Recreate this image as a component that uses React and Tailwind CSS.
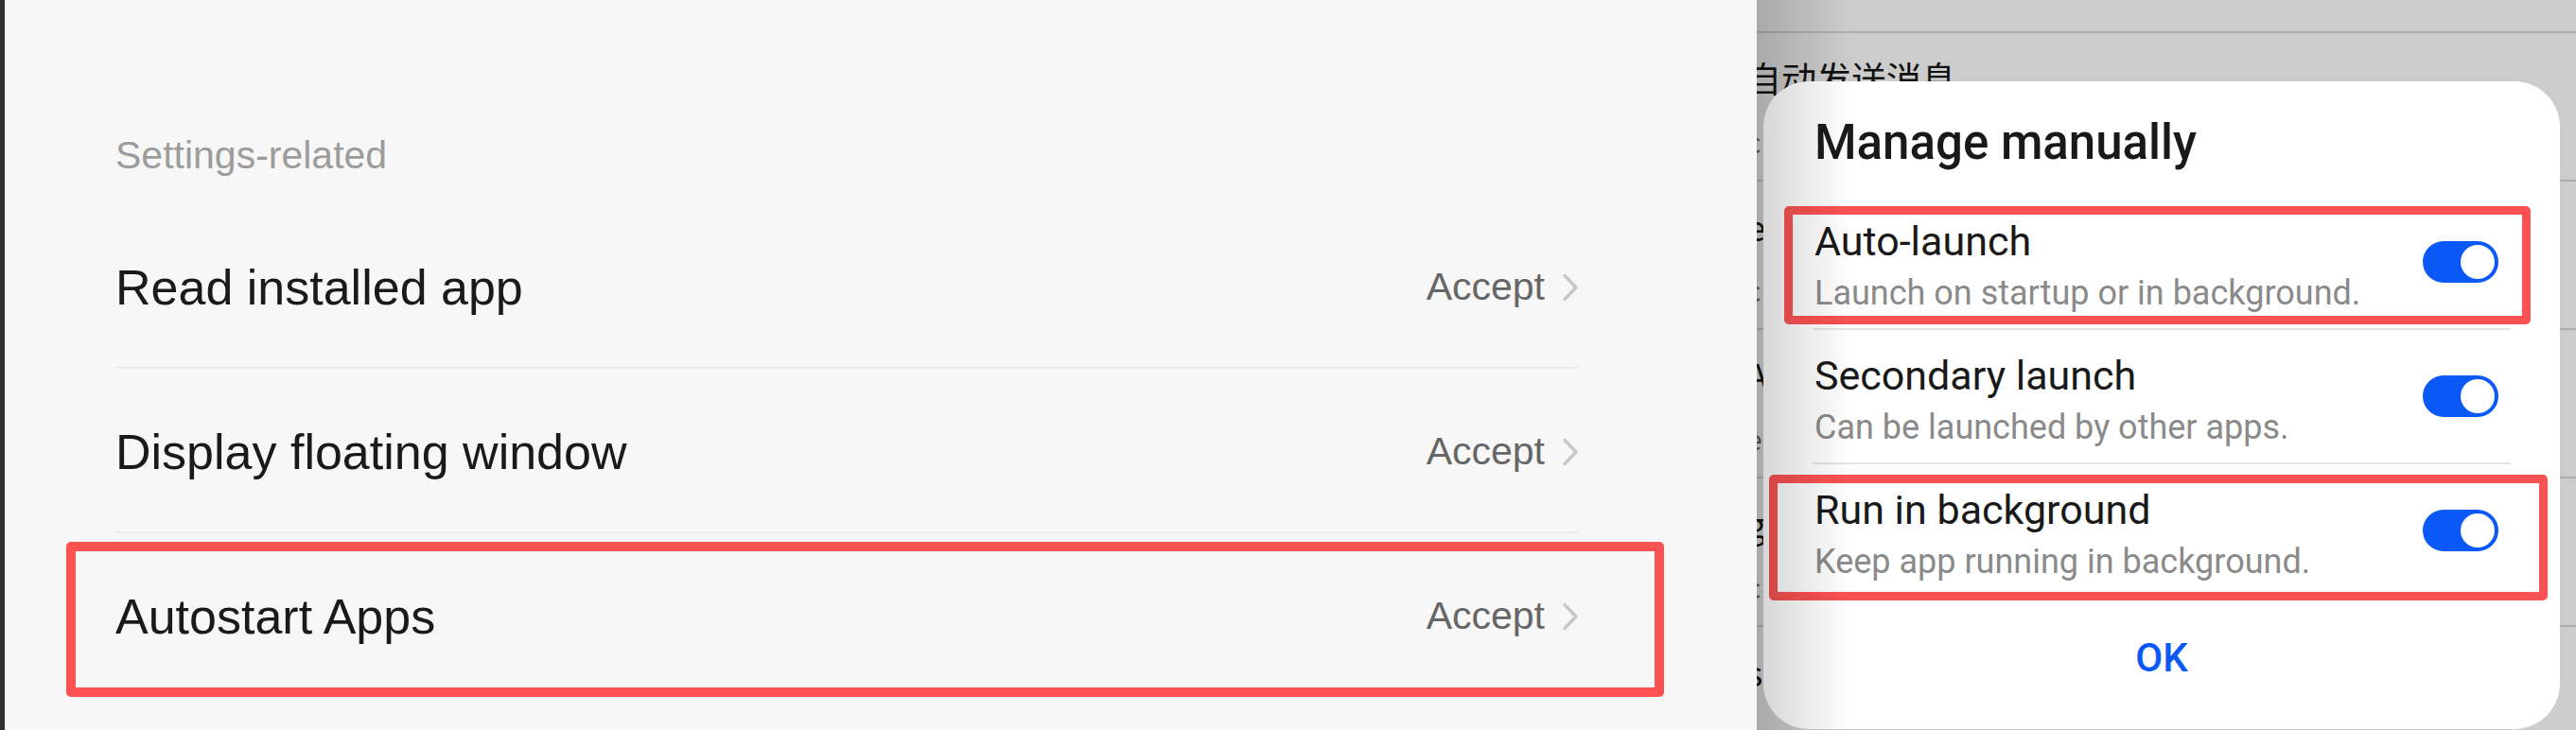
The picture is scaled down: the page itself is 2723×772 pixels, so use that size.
import React from "react";

const permissions = [
  { label: "Read installed app", value: "Accept" },
  { label: "Display floating window", value: "Accept" },
  { label: "Autostart Apps", value: "Accept" },
];

const options = [
  { title: "Auto-launch", desc: "Launch on startup or in background." },
  { title: "Secondary launch", desc: "Can be launched by other apps." },
  { title: "Run in background", desc: "Keep app running in background." },
];

// rows of the app behind the dialog, only slivers show
const backgroundRows = [
  { title: "自动发送消息", sub: "c" },
  { title: "e", sub: "c" },
  { title: "A", sub: "e" },
  { title: "g", sub: "c" },
  { title: "s", sub: "" },
];

function Chevron() {
  return (
    <svg width="18" height="30" viewBox="0 0 18 30" fill="none">
      <path
        d="M3 2.5L15 15L3 27.5"
        stroke="#c8c8c8"
        strokeWidth="3.5"
        strokeLinecap="round"
        strokeLinejoin="round"
      />
    </svg>
  );
}

function Toggle() {
  return (
    <div className="w-[80px] h-[44px] rounded-full bg-[#0a59f7] p-[4px] flex justify-end">
      <div className="w-[36px] h-[36px] rounded-full bg-white" />
    </div>
  );
}

export default function App() {
  return (
    <div className="flex w-[2723px] h-[772px] overflow-hidden bg-[#303030]">
      <div className="w-[5px] shrink-0 bg-[#303030]" />

      {/* settings panel */}
      <div className="relative z-10 w-[1852px] shrink-0 bg-[#f7f7f7] pl-[117px] pr-[188px] font-['Liberation_Sans',Arial,sans-serif]">
        <div className="h-[216px] pt-[144px]">
          <p className="text-[41px] leading-[41px] text-[#9c9c9c]">Settings-related</p>
        </div>
        {permissions.map((row, i) => (
          <div key={row.label}>
            {i > 0 && <div className="h-[2px] bg-[#ebebeb]" />}
            <div className="h-[172px] flex items-center justify-between pt-[3px]">
              <span className="text-[52px] leading-[52px] text-[#1a1a1a]">{row.label}</span>
              <span className="flex items-center">
                <span className="text-[41px] leading-[41px] text-[#666666]">{row.value}</span>
                <span className="ml-[18px] flex">
                  <Chevron />
                </span>
              </span>
            </div>
          </div>
        ))}
        <div className="absolute left-[65px] top-[573px] w-[1689px] h-[164px] border-[10px] border-[#fa5252] rounded-[5px]" />
      </div>

      {/* dimmed app behind the dialog */}
      <div className="relative -ml-[11px] flex-1 bg-[#cccccc] font-['Noto_Sans_CJK_SC',sans-serif]">
        <div className="h-[33px]" />
        {backgroundRows.map((r, i) => (
          <div key={i} className="h-[157px] border-t-2 border-[#adadad] pt-[29px]">
            <p className="text-[37px] leading-[37px] text-[#111111] whitespace-nowrap">{r.title}</p>
            {r.sub && (
              <p className="mt-[33px] text-[30px] leading-[30px] text-[#555555] whitespace-nowrap">{r.sub}</p>
            )}
          </div>
        ))}

        <div className="absolute left-[18px] top-[86px] w-[842px] h-[685px] rounded-[48px] bg-white px-[52px] pt-[40px] font-['Roboto',sans-serif]">
          <h2 className="pl-[2px] text-[51px] leading-[50px] font-medium text-[#191919]">Manage manually</h2>
          <div className="mt-[31px]">
            {options.map((o, i) => (
              <div key={o.title}>
                {i > 0 && <div className="h-[2px] bg-[#e6e6e6]" />}
                <div className="h-[140px] flex items-center justify-between">
                  <div className="pt-[9px] pl-[2px]">
                    <p className="text-[43px] leading-[48px] text-[#191919]">{o.title}</p>
                    <p className="mt-[9px] text-[36px] leading-[44px] text-[#8a8a8a]">{o.desc}</p>
                  </div>
                  <div className="mr-[13px]">
                    <Toggle />
                  </div>
                </div>
              </div>
            ))}
          </div>
          <p className="mt-[40px] text-center text-[42px] leading-[50px] font-medium text-[#0a59f7]">OK</p>

          <div className="absolute left-[22px] top-[132px] w-[789px] h-[125px] border-[9px] border-[#fa5252] rounded-[5px]" />
          <div className="absolute left-[6px] top-[416px] w-[823px] h-[133px] border-[9px] border-[#fa5252] rounded-[5px]" />
        </div>

        <div className="absolute left-[11px] top-0 bottom-0 w-[100px] bg-linear-to-r from-black/[0.17] to-transparent pointer-events-none" />
      </div>
    </div>
  );
}
